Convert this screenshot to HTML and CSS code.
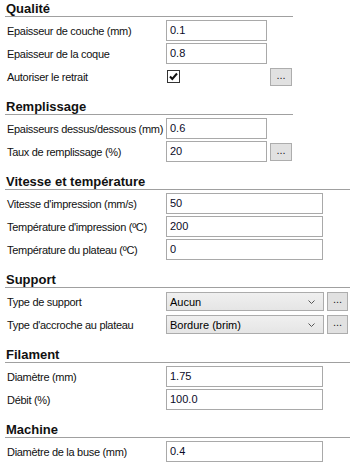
FILE: index.html
```html
<!DOCTYPE html>
<html lang="fr">
<head>
<meta charset="utf-8">
<title>Paramètres</title>
<link rel="stylesheet" href="styles.css">
</head>
<body>
<div class="panel">
  <section class="sec narrow">
    <h2 class="title">Qualité</h2>
    <div class="rows">
      <div class="row"><span class="lbl">Epaisseur de couche (mm)</span><span class="input">0.1</span></div>
      <div class="row"><span class="lbl">Epaisseur de la coque</span><span class="input">0.8</span></div>
      <div class="row chk-row"><span class="lbl">Autoriser le retrait</span><span class="field-chk"><span class="chk"><svg viewBox="0 0 11 11" width="11" height="11"><path d="M2 5.5 L4.3 8 L9 2.5" fill="none" stroke="#111" stroke-width="2"/></svg></span></span><span class="btn">...</span></div>
    </div>
  </section>
  <section class="sec narrow">
    <h2 class="title">Remplissage</h2>
    <div class="rows">
      <div class="row"><span class="lbl">Epaisseurs dessus/dessous (mm)</span><span class="input">0.6</span></div>
      <div class="row"><span class="lbl">Taux de remplissage (%)</span><span class="input">20</span><span class="btn">...</span></div>
    </div>
  </section>
  <section class="sec wide">
    <h2 class="title">Vitesse et température</h2>
    <div class="rows">
      <div class="row"><span class="lbl">Vitesse d'impression (mm/s)</span><span class="input">50</span></div>
      <div class="row"><span class="lbl">Température d'impression (ºC)</span><span class="input">200</span></div>
      <div class="row"><span class="lbl">Température du plateau (ºC)</span><span class="input">0</span></div>
    </div>
  </section>
  <section class="sec wide">
    <h2 class="title">Support</h2>
    <div class="rows">
      <div class="row"><span class="lbl">Type de support</span><span class="select">Aucun<svg class="chev" viewBox="0 0 7 4" width="7" height="4"><path d="M0.5 0.5 L3.5 3.5 L6.5 0.5" fill="none" stroke="#555" stroke-width="1"/></svg></span><span class="btn sbtn">...</span></div>
      <div class="row"><span class="lbl">Type d'accroche au plateau</span><span class="select">Bordure (brim)<svg class="chev" viewBox="0 0 7 4" width="7" height="4"><path d="M0.5 0.5 L3.5 3.5 L6.5 0.5" fill="none" stroke="#555" stroke-width="1"/></svg></span><span class="btn sbtn">...</span></div>
    </div>
  </section>
  <section class="sec wide">
    <h2 class="title">Filament</h2>
    <div class="rows">
      <div class="row"><span class="lbl">Diamètre (mm)</span><span class="input">1.75</span></div>
      <div class="row"><span class="lbl">Débit (%)</span><span class="input">100.0</span></div>
    </div>
  </section>
  <section class="sec wide">
    <h2 class="title">Machine</h2>
    <div class="rows">
      <div class="row"><span class="lbl">Diamètre de la buse (mm)</span><span class="input">0.4</span></div>
    </div>
  </section>
</div>
</body>
</html>
```
FILE: styles.css
```css
html, body {
  margin: 0;
  padding: 0;
  background: #ffffff;
}
body {
  font-family: "Liberation Sans", Arial, sans-serif;
  font-size: 11px;
  color: #000;
  width: 350px;
  height: 467px;
  overflow: hidden;
}
.panel {
  display: flex;
  flex-direction: column;
}
.sec {
  margin-left: 5px;
  margin-bottom: 11px;
}
.sec.narrow { width: 288px; }
.sec.wide { width: 345px; }
.title {
  margin: 0;
  height: 16px;
  line-height: 17px;
  padding-left: 1px;
  font-size: 13px;
  font-weight: bold;
  color: #111;
  border-bottom: 1px solid #a0a0a0;
}
.rows {
  padding-top: 3px;
  display: flex;
  flex-direction: column;
  gap: 2px;
}
.row {
  display: flex;
  align-items: center;
  height: 21px;
}
.lbl {
  width: 159px;
  padding-left: 2px;
  flex: none;
  white-space: nowrap;
  letter-spacing: -0.3px;
  color: #111;
}
.input {
  box-sizing: border-box;
  height: 21px;
  line-height: 19px;
  border: 1px solid #a9a9a9;
  padding-left: 3px;
  background: #fff;
  color: #0a0a28;
}
.narrow .input { width: 101px; }
.wide .input { width: 157px; }
.field-chk {
  width: 101px;
  display: flex;
  align-items: center;
}
.chk {
  box-sizing: border-box;
  width: 13px;
  height: 13px;
  border: 1px solid #333;
  background: #fff;
  display: flex;
  align-items: center;
  justify-content: center;
  margin-left: 1px;
}
.chk svg { display: block; }
.btn {
  box-sizing: border-box;
  width: 22px;
  height: 18px;
  margin-left: 3px;
  border: 1px solid #adadad;
  background: #e1e1e1;
  text-align: center;
  line-height: 13px;
  font-size: 11px;
  color: #222;
}
.select {
  box-sizing: border-box;
  width: 158px;
  height: 19px;
  border: 1px solid #acacac;
  background: linear-gradient(#f0f0f0, #e5e5e5);
  display: flex;
  align-items: center;
  justify-content: space-between;
  padding: 0 8px 0 3px;
}
.chev { display: block; }
.sbtn { height: 19px; width: 21px; }
```
